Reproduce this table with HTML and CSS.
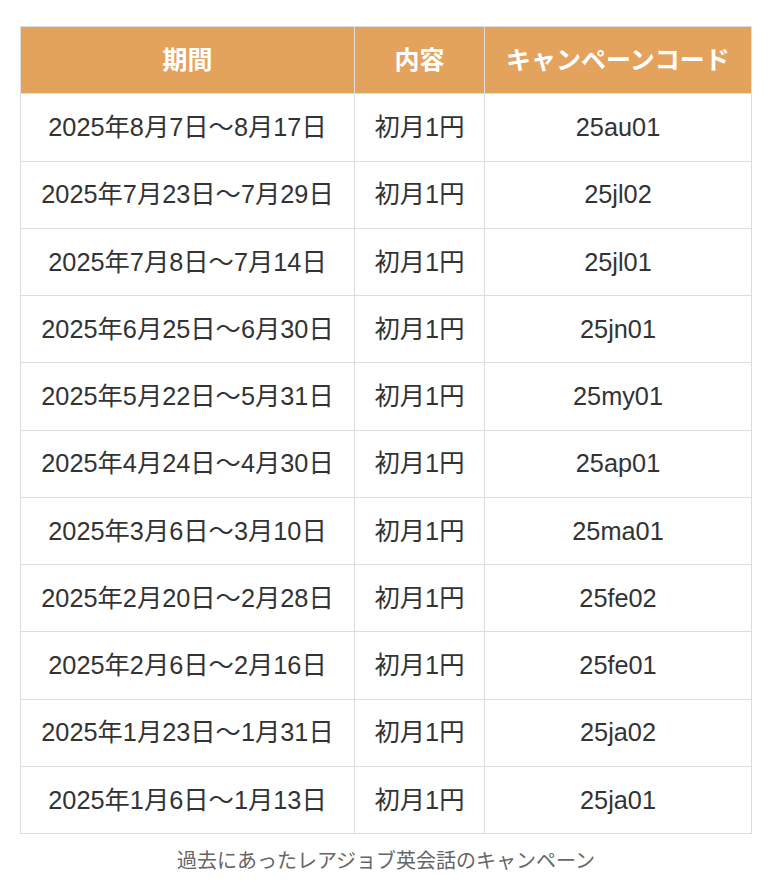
FILE: index.html
```html
<!DOCTYPE html>
<html lang="ja">
<head>
<meta charset="utf-8">
<link rel="stylesheet" href="styles.css">
</head>
<body>
<div class="page">
<table class="campaign">
<colgroup><col class="c1"><col class="c2"><col class="c3"></colgroup>
<thead>
<tr><th>期間</th><th>内容</th><th>キャンペーンコード</th></tr>
</thead>
<tbody>
<tr><td>2025年8月7日〜8月17日</td><td>初月1円</td><td>25au01</td></tr>
<tr><td>2025年7月23日〜7月29日</td><td>初月1円</td><td>25jl02</td></tr>
<tr><td>2025年7月8日〜7月14日</td><td>初月1円</td><td>25jl01</td></tr>
<tr><td>2025年6月25日〜6月30日</td><td>初月1円</td><td>25jn01</td></tr>
<tr><td>2025年5月22日〜5月31日</td><td>初月1円</td><td>25my01</td></tr>
<tr><td>2025年4月24日〜4月30日</td><td>初月1円</td><td>25ap01</td></tr>
<tr><td>2025年3月6日〜3月10日</td><td>初月1円</td><td>25ma01</td></tr>
<tr><td>2025年2月20日〜2月28日</td><td>初月1円</td><td>25fe02</td></tr>
<tr><td>2025年2月6日〜2月16日</td><td>初月1円</td><td>25fe01</td></tr>
<tr><td>2025年1月23日〜1月31日</td><td>初月1円</td><td>25ja02</td></tr>
<tr><td>2025年1月6日〜1月13日</td><td>初月1円</td><td>25ja01</td></tr>
</tbody>
<caption>過去にあったレアジョブ英会話のキャンペーン</caption>
</table>
</div>
</body>
</html>
```
FILE: styles.css
```css
html, body {
  margin: 0;
  padding: 0;
  background: #ffffff;
}
.page {
  padding: 26px 0 0 20px;
  font-family: "Liberation Sans", "Noto Sans CJK JP", sans-serif;
  color: #333333;
}
.campaign {
  border-collapse: collapse;
  table-layout: fixed;
  width: 731px;
}
.c1 { width: 334px; }
.c2 { width: 130px; }
.c3 { width: 267px; }
.campaign th,
.campaign td {
  border: 1px solid #dddddd;
  text-align: center;
  vertical-align: middle;
  padding: 0;
  height: 66.25px;
  font-size: 25.3px;
  line-height: 1.2;
}
.campaign th {
  background: #e4a35d;
  color: #ffffff;
  font-weight: bold;
  font-size: 25px;
}
.campaign caption {
  caption-side: bottom;
  padding-top: 13px;
  font-size: 20px;
  line-height: 28px;
  color: #666666;
}
```
